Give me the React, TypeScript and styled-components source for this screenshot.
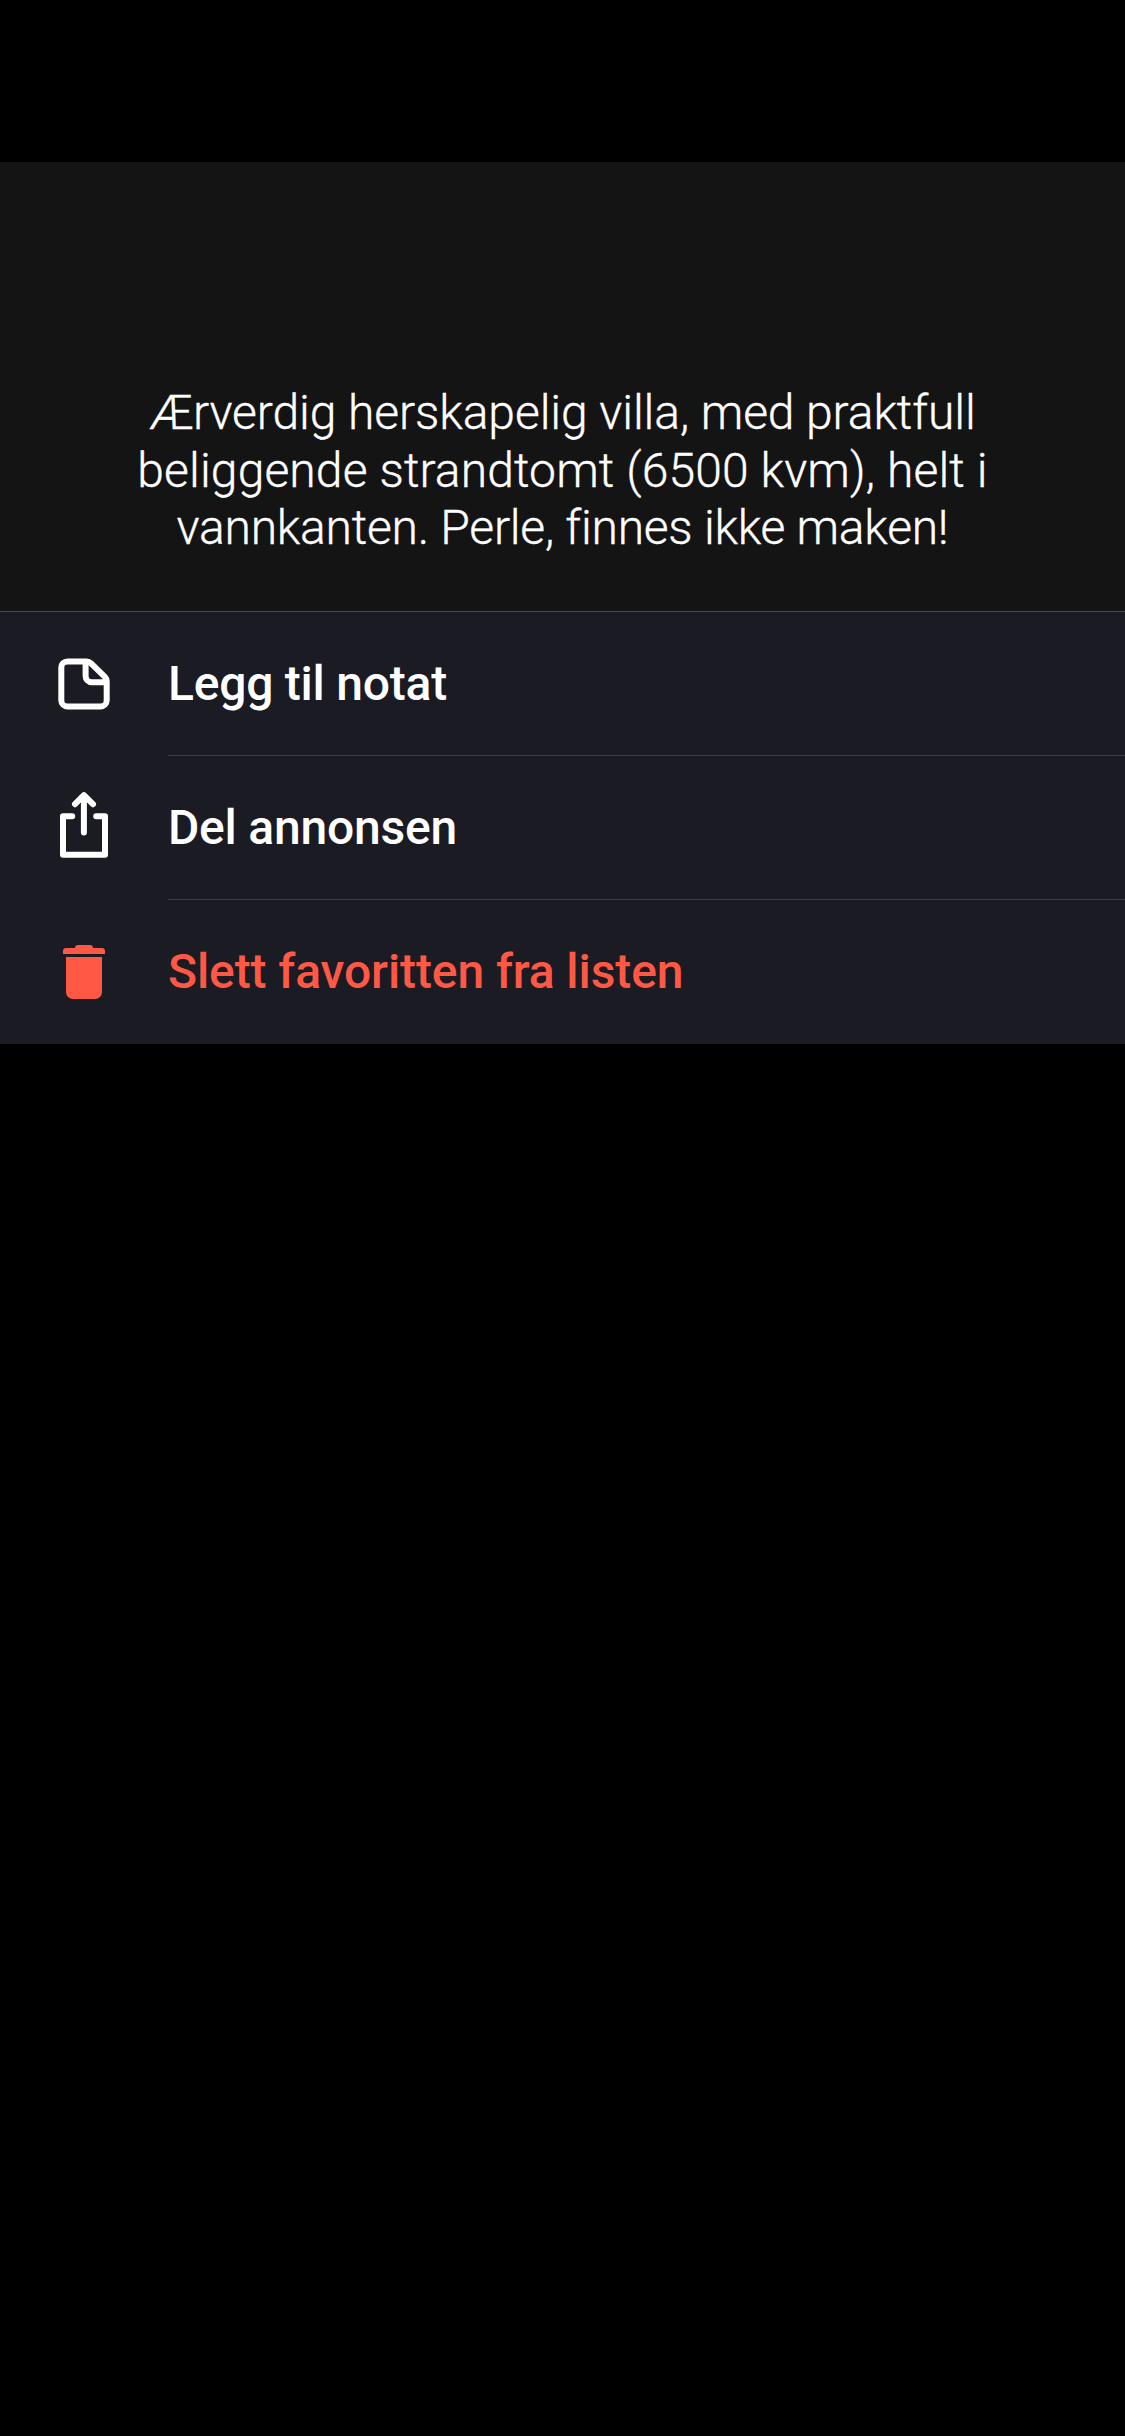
import React from "react";
import styled, { createGlobalStyle } from "styled-components";

const GlobalStyle = createGlobalStyle`
  html, body {
    margin: 0;
    background: #000;
  }
`;

const Screen = styled.main`
  box-sizing: border-box;
  width: 100%;
  min-height: 100vh;
  padding-top: 162px;
  background: #000;
  color: #fff;
  font-family: Roboto, "Liberation Sans", sans-serif;
  font-size: 48px;
`;

const Header = styled.header`
  box-sizing: border-box;
  height: 450px;
  padding-top: 222px;
  background: #141414;
  border-bottom: 1px solid #464650;
`;

const Title = styled.h1`
  margin: 0;
  font-size: inherit;
  font-weight: 300;
  line-height: 57.5px;
  text-align: center;
  -webkit-text-stroke: 0.35px currentColor;
`;

const TitleLine = styled.span<{ $tracking: number }>`
  display: block;
  white-space: nowrap;
  letter-spacing: ${({ $tracking }) => $tracking}px;
`;

const Menu = styled.ul`
  margin: 0;
  padding: 0;
  list-style: none;
  background: #1b1b24;
`;

const MenuItem = styled.li<{ $danger?: boolean }>`
  display: flex;
  height: 144px;
  padding-left: 40px;
  gap: 38px;
  color: ${({ $danger }) => ($danger ? "#ff5844" : "#fff")};
`;

const IconSlot = styled.span`
  display: flex;
  align-items: center;
  flex: none;

  svg {
    display: block;
    width: 90px;
    height: 90px;
  }
`;

const Label = styled.span<{ $tracking: number; $divided?: boolean }>`
  box-sizing: border-box;
  flex: 1;
  height: 144px;
  padding-top: 43px;
  border-bottom: ${({ $divided }) => ($divided ? "1px solid #3e3e40" : "none")};
  font-weight: 500;
  line-height: 57px;
  letter-spacing: ${({ $tracking }) => $tracking}px;
  white-space: nowrap;
`;

const NoteIcon = () => (
  <svg viewBox="0 -1 90 90" fill="none" stroke="currentColor" strokeWidth="6" strokeLinejoin="round">
    <path d="M27.5 21.4H46.6c1.6 0 3.1.6 4.2 1.7L64.9 36.9c1.2 1.2 1.8 2.7 1.8 4.4V60.3a6.2 6.2 0 0 1-6.2 6.2h-33a6.2 6.2 0 0 1-6.2-6.2V27.6a6.2 6.2 0 0 1 6.2-6.2z" />
    <path d="M45.6 21.4V36a6.2 6.2 0 0 0 6.2 6.2H66.5" />
  </svg>
);

const ShareIcon = () => (
  <svg
    viewBox="0 3 90 90"
    fill="none"
    stroke="currentColor"
    strokeWidth="6"
    strokeLinecap="round"
    strokeLinejoin="round"
  >
    <path d="M32.2 36.2H23V74.8H65V36.2H56.2" />
    <path d="M43.9 52.6V15.5M35 24.2L43.9 15.2L53 24.2" />
  </svg>
);

const TrashIcon = () => (
  <svg viewBox="0 -3 90 90" fill="currentColor">
    <path d="M23 24V21a3 3 0 0 1 3-3h9a3 3 0 0 1 3-3h12a3 3 0 0 1 3 3h9a3 3 0 0 1 3 3v3z" />
    <path d="M26 27H62V62a7 7 0 0 1-7 7H33a7 7 0 0 1-7-7z" />
  </svg>
);

const titleLines = [
  { text: "Ærverdig herskapelig villa, med praktfull", tracking: -0.0875 },
  { text: "beliggende strandtomt (6500 kvm), helt i", tracking: 0.126 },
  { text: "vannkanten. Perle, finnes ikke maken!", tracking: -0.25 },
];

const actions = [
  { label: "Legg til notat", tracking: -0.23, Icon: NoteIcon },
  { label: "Del annonsen", tracking: -0.22, Icon: ShareIcon },
  { label: "Slett favoritten fra listen", tracking: -0.1, Icon: TrashIcon, danger: true },
];

export default function App() {
  return (
    <>
      <GlobalStyle />
      <Screen>
        <Header>
          <Title>
            {titleLines.map(({ text, tracking }) => (
              <TitleLine key={text} $tracking={tracking}>
                {text}
              </TitleLine>
            ))}
          </Title>
        </Header>
        <Menu>
          {actions.map(({ label, tracking, Icon, danger }, i) => (
            <MenuItem key={label} $danger={danger}>
              <IconSlot>
                <Icon />
              </IconSlot>
              <Label $tracking={tracking} $divided={i < actions.length - 1}>
                {label}
              </Label>
            </MenuItem>
          ))}
        </Menu>
      </Screen>
    </>
  );
}
